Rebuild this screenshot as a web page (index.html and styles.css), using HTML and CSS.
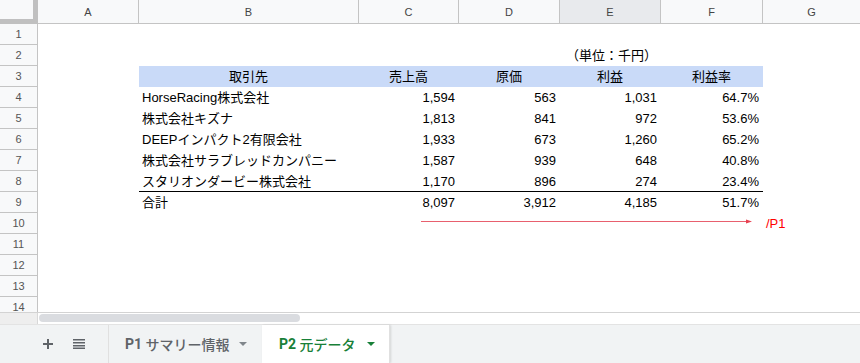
FILE: index.html
```html
<!DOCTYPE html>
<html lang="ja">
<head>
    <meta charset="UTF-8">
    <title>P2 元データ</title>
    <link rel="stylesheet" href="styles.css">
</head>
<body>
<div class="grid">
    <div class="corner"></div>
    <div class="ch">A</div>
    <div class="ch">B</div>
    <div class="ch">C</div>
    <div class="ch">D</div>
    <div class="ch sel">E</div>
    <div class="ch">F</div>
    <div class="ch last">G</div>

    <div class="rh">1</div>

    <div class="rh">2</div>
    <div class="cell e num">（単位：千円）</div>

    <div class="rh">3</div>
    <div class="cell b hd">取引先</div>
    <div class="cell c hd">売上高</div>
    <div class="cell d hd">原価</div>
    <div class="cell e hd">利益</div>
    <div class="cell f hd">利益率</div>

    <div class="rh">4</div>
    <div class="cell b">HorseRacing株式会社</div>
    <div class="cell c num">1,594</div>
    <div class="cell d num">563</div>
    <div class="cell e num">1,031</div>
    <div class="cell f num">64.7%</div>

    <div class="rh">5</div>
    <div class="cell b">株式会社キズナ</div>
    <div class="cell c num">1,813</div>
    <div class="cell d num">841</div>
    <div class="cell e num">972</div>
    <div class="cell f num">53.6%</div>

    <div class="rh">6</div>
    <div class="cell b">DEEPインパクト2有限会社</div>
    <div class="cell c num">1,933</div>
    <div class="cell d num">673</div>
    <div class="cell e num">1,260</div>
    <div class="cell f num">65.2%</div>

    <div class="rh">7</div>
    <div class="cell b">株式会社サラブレッドカンパニー</div>
    <div class="cell c num">1,587</div>
    <div class="cell d num">939</div>
    <div class="cell e num">648</div>
    <div class="cell f num">40.8%</div>

    <div class="rh">8</div>
    <div class="cell b rule">スタリオンダービー株式会社</div>
    <div class="cell c num rule">1,170</div>
    <div class="cell d num rule">896</div>
    <div class="cell e num rule">274</div>
    <div class="cell f num rule">23.4%</div>

    <div class="rh">9</div>
    <div class="cell b">合計</div>
    <div class="cell c num">8,097</div>
    <div class="cell d num">3,912</div>
    <div class="cell e num">4,185</div>
    <div class="cell f num">51.7%</div>

    <div class="rh">10</div>
    <div class="arrow">
        <svg width="336" height="8" viewBox="0 0 336 8">
            <line x1="0" y1="4.5" x2="327" y2="4.5" stroke="#e8606e" stroke-width="1"/>
            <polygon points="325,2.5 331,4.5 325,6.5" fill="#e84050"/>
        </svg>
    </div>
    <div class="cell g link">/P1</div>

    <div class="rh">11</div>
    <div class="rh">12</div>
    <div class="rh">13</div>
    <div class="rh">14</div>
</div>

<div class="hscroll">
    <div class="hs-corner"></div>
    <div class="thumb"></div>
</div>

<div class="tabbar">
    <div class="tools">
        <svg width="10" height="10" viewBox="0 0 10 10">
            <path d="M5 0v10M0 5h10" stroke="#5f6368" stroke-width="2"/>
        </svg>
        <svg width="12" height="10" viewBox="0 0 12 10">
            <path d="M0 0.75h12M0 3.75h12M0 6.75h12M0 9.25h12" stroke="#5f6368" stroke-width="1.5"/>
        </svg>
    </div>
    <div class="tab">
        <b>P1</b>&nbsp;サマリー情報
        <span class="caret"></span>
    </div>
    <div class="tab active">
        <b>P2</b>&nbsp;元データ
        <span class="caret"></span>
    </div>
</div>
</body>
</html>
```

FILE: styles.css
```css
/* Sheet view */
* {
    box-sizing: border-box;
}

body {
    margin: 0;
    width: 860px;
    height: 363px;
    overflow: hidden;
    background: #FFFFFF;
    font-family: "Liberation Sans", Arial, "Noto Sans CJK JP", sans-serif;
}

.grid {
    display: grid;
    grid-template-columns: 38px 101px 220px 100px 101px 101px 102px 1fr;
    grid-template-rows: 24px;
    grid-auto-rows: 21px;
    height: 312px;
    overflow: hidden;
}

.corner {
    background: #f8f9fa;
    border-right: 5px solid #c0c0c0;
    border-bottom: 5px solid #c0c0c0;
}

.ch {
    display: flex;
    align-items: center;
    justify-content: center;
    background: #f8f9fa;
    border-right: 1px solid #c4c4c4;
    border-bottom: 1px solid #c4c4c4;
    font-size: 11px;
    color: #444444;
}

.ch.sel {
    background: #e8eaed;
}

.ch.last {
    border-right: none;
}

.rh {
    grid-column: 1;
    background: #f8f9fa;
    border-right: 1px solid #c4c4c4;
    border-bottom: 1px solid #c4c4c4;
    font-size: 11px;
    line-height: 20px;
    text-align: center;
    color: #555555;
}

.cell {
    padding: 0 4px 0 3px;
    font-size: 13px;
    line-height: 21px;
    white-space: nowrap;
    color: #000000;
}

.b { grid-column: 3; }
.c { grid-column: 4; }
.d { grid-column: 5; }
.e { grid-column: 6; }
.f { grid-column: 7; }
.g { grid-column: 8; }

.hd {
    background: #c9daf8;
    text-align: center;
}

.num {
    text-align: right;
}

.rule {
    border-bottom: 1px solid #000000;
}

.arrow {
    grid-column: 4 / 8;
    padding: 4px 0 0 62px;
}

.arrow svg {
    display: block;
}

.link {
    color: #ff0000;
}

.hscroll {
    display: flex;
    height: 12px;
    border-top: 1px solid #d3d3d3;
}

.hs-corner {
    width: 38px;
    background: #eeeeee;
    border-right: 1px solid #d8d8d8;
}

.thumb {
    width: 261px;
    height: 8px;
    margin: 1px 0 0 1px;
    border-radius: 4px;
    background: #dadce0;
}

.tabbar {
    display: flex;
    height: 39px;
    background: #f1f3f4;
    border-top: 1px solid #e3e3e3;
}

.tools {
    display: flex;
    align-items: center;
    gap: 20px;
    width: 109px;
    padding-left: 43px;
    border-right: 1px solid #e0e0e0;
}

.tab {
    display: flex;
    align-items: center;
    width: 153px;
    padding-left: 16px;
    font-family: Roboto, "Noto Sans CJK JP", sans-serif;
    font-size: 14px;
    font-weight: 500;
    color: #5f6368;
    white-space: nowrap;
}

.tab b {
    font-weight: 700;
}

.tab .caret {
    width: 0;
    height: 0;
    margin-left: 9px;
    border-left: 4px solid transparent;
    border-right: 4px solid transparent;
    border-top: 4px solid #80868b;
}

.tab.active {
    width: 128px;
    padding-left: 17px;
    background: #FFFFFF;
    color: #188038;
    border-right: 1px solid #e0e0e0;
    box-shadow: 1px 0 2px rgba(0, 0, 0, 0.12);
}

.tab.active .caret {
    margin-left: 11px;
    border-top-color: #188038;
}
```
